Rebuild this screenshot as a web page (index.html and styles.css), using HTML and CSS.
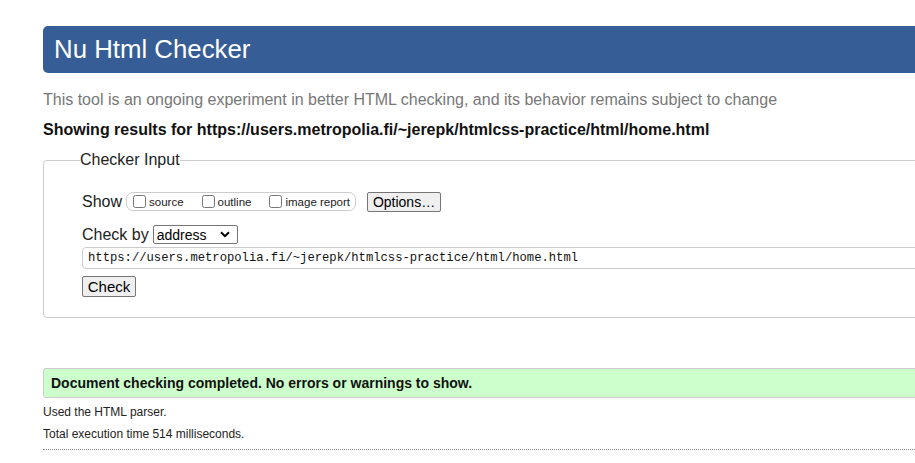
FILE: index.html
```html
<!DOCTYPE html>
<html lang="en">
<head>
<meta charset="utf-8">
<title>Nu Html Checker</title>
<link rel="stylesheet" href="styles.css">
</head>
<body>
<div class="page">
  <h1 class="banner">Nu Html Checker</h1>
  <p class="tagline">This tool is an ongoing experiment in better HTML checking, and its behavior remains subject to change</p>
  <p class="results-for">Showing results for https://users.metropolia.fi/~jerepk/htmlcss-practice/html/home.html</p>
  <form class="checker">
    <fieldset class="checker-box">
      <legend class="checker-legend">Checker Input</legend>
      <div class="row show-row">
        <span class="row-label">Show</span>
        <span class="show-group">
          <label class="opt"><input type="checkbox" class="cb"><span>source</span></label>
          <label class="opt"><input type="checkbox" class="cb"><span>outline</span></label>
          <label class="opt"><input type="checkbox" class="cb"><span>image report</span></label>
        </span>
        <button type="button" class="btn btn-options">Options…</button>
      </div>
      <div class="row checkby-row">
        <span class="row-label">Check by</span>
        <span class="select-wrap">
          <select class="select"><option>address</option></select>
          <svg class="chev" width="10" height="7" viewBox="0 0 10 7"><path d="M1 1.2 L5 5.2 L9 1.2" fill="none" stroke="#000" stroke-width="2"/></svg>
        </span>
      </div>
      <input class="url" type="text" value="https://users.metropolia.fi/~jerepk/htmlcss-practice/html/home.html">
      <button type="button" class="btn btn-check">Check</button>
    </fieldset>
  </form>
  <p class="success">Document checking completed. No errors or warnings to show.</p>
  <p class="meta">Used the HTML parser.</p>
  <p class="meta">Total execution time 514 milliseconds.</p>
  <hr class="dots">
</div>
</body>
</html>
```
FILE: styles.css
```css
html, body {
  margin: 0;
  padding: 0;
  overflow: hidden;
  background: #fff;
}
body {
  font-family: "Liberation Sans", Arial, sans-serif;
  color: #000;
}
.page {
  padding: 26px 0 0 43px;
  width: 1000px;
}
.banner {
  margin: 0;
  height: 47px;
  line-height: 47px;
  background: #365d95;
  color: #fff;
  font-size: 25.8px;
  font-weight: normal;
  padding-left: 11px;
  border-radius: 5px;
}
.tagline {
  margin: 17px 0 0;
  font-size: 16px;
  line-height: 20px;
  color: #777;
}
.results-for {
  margin: 10px 0 0;
  font-size: 16px;
  line-height: 20px;
  font-weight: bold;
  color: #111;
}
.checker {
  margin: 10px 0 0;
}
.checker-box {
  margin: 0;
  border: 1px solid #ccc;
  border-radius: 4px;
  padding: 21px 0 20px 38px;
  min-width: 0;
}
.checker-legend {
  padding: 0;
  margin-left: -2px;
  font-size: 16px;
  line-height: 20px;
  color: #222;
}
.row {
  display: flex;
  align-items: center;
}
.show-row {
  height: 21px;
}
.row-label {
  font-size: 16px;
  color: #222;
}
.show-group {
  display: inline-flex;
  align-items: center;
  gap: 18px;
  margin-left: 4px;
  height: 19px;
  box-sizing: border-box;
  border: 1px solid #ccc;
  border-radius: 7px;
  padding: 0 5px 0 6px;
}
.opt {
  display: inline-flex;
  align-items: center;
  font-size: 11.5px;
  color: #222;
}
.cb {
  margin: 0 3px 0 0;
  width: 13px;
  height: 13px;
}
.btn {
  font-family: "Liberation Sans", Arial, sans-serif;
  background: #efefef;
  border: 1px solid #767676;
  border-radius: 2px;
  color: #000;
  padding: 0;
  box-sizing: border-box;
}
.btn-options {
  margin-left: 11px;
  width: 74px;
  height: 20px;
  font-size: 14px;
}
.checkby-row {
  margin-top: 13px;
  height: 19px;
}
.select-wrap {
  position: relative;
  display: inline-block;
  margin-left: 4px;
}
.select {
  appearance: none;
  -webkit-appearance: none;
  width: 85px;
  height: 19px;
  box-sizing: border-box;
  border: 1px solid #767676;
  border-radius: 2px;
  background: #fff;
  font-family: "Liberation Sans", Arial, sans-serif;
  font-size: 14px;
  padding: 0 0 0 3px;
  color: #000;
  display: block;
}
.chev {
  position: absolute;
  right: 8px;
  top: 6px;
  pointer-events: none;
}
.url {
  display: block;
  margin: 3px 0 0 0;
  width: 900px;
  height: 22px;
  box-sizing: border-box;
  border: 1px solid #ccc;
  border-radius: 4px;
  padding: 0 5px;
  font-family: "Liberation Mono", "Courier New", monospace;
  font-size: 12.2px;
  color: #111;
}
.btn-check {
  display: block;
  margin-top: 7px;
  width: 54px;
  height: 21px;
  font-size: 15px;
}
.success {
  margin: 50px 0 0;
  height: 30px;
  box-sizing: border-box;
  line-height: 28px;
  border: 1px solid #ccc;
  border-radius: 3px;
  background: #ccffcc;
  padding-left: 7px;
  font-size: 14px;
  font-weight: bold;
  color: #111;
}
.meta {
  margin: 0;
  font-size: 12px;
  line-height: 22px;
  color: #222;
}
.success + .meta {
  margin-top: 3px;
}
.dots {
  margin: 4px 0 0;
  border: 0;
  border-top: 1px dotted #888;
  height: 0;
}
```
